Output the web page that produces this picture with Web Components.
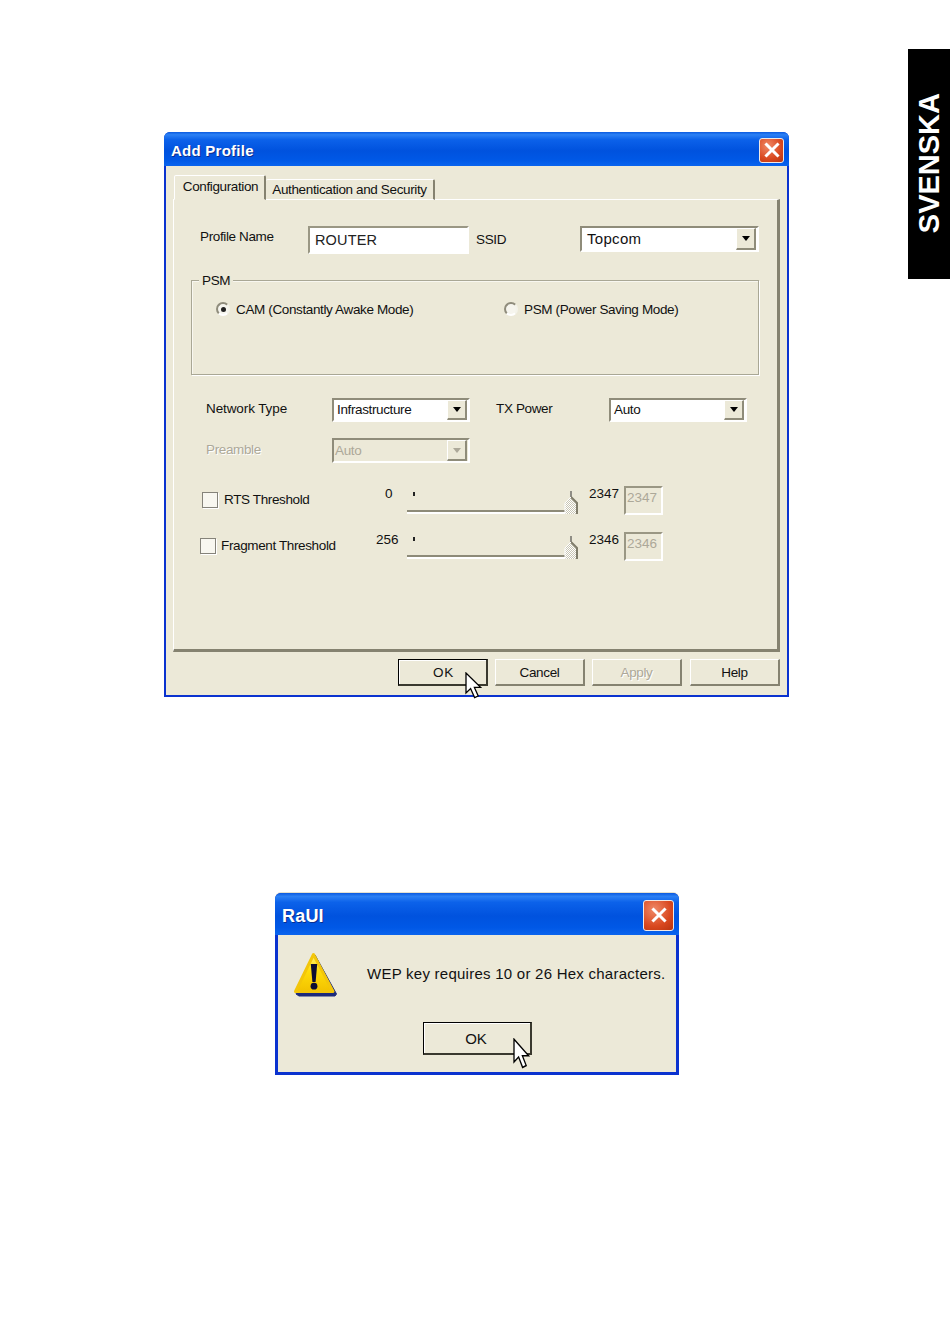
<!DOCTYPE html>
<html lang="sv">
<head>
<meta charset="utf-8">
<title>Add Profile</title>
<style>
  html, body { margin: 0; background: #fff; }
  body { font-family: "Liberation Sans", Arial, sans-serif; color: #111; font-size: 13.5px; letter-spacing: -.37px; }
  .page { position: relative; width: 950px; height: 1344px; overflow: hidden; padding-top: 132px; box-sizing: border-box; }
</style>
</head>
<body>
<div class="page">
  <side-tab>SVENSKA</side-tab>
  <add-profile-dialog></add-profile-dialog>
  <wep-alert></wep-alert>
</div>

<script>
// small helper so every element gets an open shadow root with its own styles
function shadow(el, html) {
  el.attachShadow({ mode: "open" }).innerHTML = html;
}

const CURSOR = `<svg style="display:block;height:var(--ch,27px)" width="18" height="27" viewBox="0 0 18 27" preserveAspectRatio="none">
  <path d="M1 1V21L5.6 16.6L9.6 25.6L13.2 24L9.4 15.4H15.6Z" fill="#fff" stroke="#000" stroke-width="1.3" stroke-linejoin="miter"/>
</svg>`;

class SideTab extends HTMLElement {
  connectedCallback() {
    shadow(this, `<style>
      :host { position: absolute; right: 0; top: 49px; width: 42px; height: 230px; background: #000; display: flex; align-items: center; justify-content: center; }
      span { writing-mode: vertical-rl; transform: rotate(180deg); color: #fff; letter-spacing: 0; font: bold 29px "Liberation Sans", Arial, sans-serif; position: relative; top: -1px; }
    </style><span><slot></slot></span>`);
  }
}

class XpWindow extends HTMLElement {
  connectedCallback() {
    shadow(this, `<style>
      :host { display: block; box-sizing: border-box; background: #0a32cf; border-radius: 6px 6px 0 0; padding: 0 var(--edge, 2px) var(--edge, 2px); box-shadow: 0 -1px 0 var(--rim, transparent); }
      .bar { height: var(--bar-h, 34px); margin: 0 calc(var(--edge, 2px) * -1); padding: var(--bar-top, 2px) 5px 0 7px; box-sizing: border-box; display: flex; align-items: center; justify-content: space-between;
        border-radius: 6px 6px 0 0;
        background: linear-gradient(#0a5ae0 0, #2b80f4 8%, #0c62ea 22%, #0052de 55%, #0058e6 82%, #0a64ee 100%); }
      .title { color: #fff; font: bold var(--title-size, 15px) "Liberation Sans", Arial, sans-serif; letter-spacing: var(--title-ls, .25px); text-shadow: 1px 1px 0 #0a2f8f; position: relative; top: var(--title-top, 0); }
      .close { box-sizing: border-box; width: var(--close-w, 25px); height: var(--close-h, 25px); border: 1px solid #f2e9e4; border-radius: 3px;
        background: radial-gradient(circle at 35% 30%, #f08a68, #d9481f 60%, #b8340f); display: flex; align-items: center; justify-content: center; }
      .client { background: #ece9d8; box-sizing: border-box; height: calc(100% - var(--bar-h, 34px)); }
    </style>
    <div class="bar">
      <span class="title">${this.getAttribute("heading") || ""}</span>
      <span class="close"><svg width="16" height="16" viewBox="0 0 16 16"><path d="M2.5 2.5L13.5 13.5M13.5 2.5L2.5 13.5" stroke="#fff" stroke-width="3" stroke-linecap="square"/></svg></span>
    </div>
    <div class="client"><slot></slot></div>`);
  }
}

class XpField extends HTMLElement {
  connectedCallback() {
    shadow(this, `<style>
      :host { display: flex; align-items: center; box-sizing: border-box; background: #fff; height: 28px;
        border: 2px solid; border-color: #9a9784 #fff #fff #9a9784; padding-left: 5px; color: #222; }
      :host([disabled]) { background: #ece9d8; color: #aca899; padding: 0 0 5px 1px; letter-spacing: 0; }
    </style><slot></slot>`);
  }
}

class XpCombo extends HTMLElement {
  connectedCallback() {
    const off = this.hasAttribute("disabled");
    shadow(this, `<style>
      :host { display: flex; box-sizing: border-box; height: 24px; background: ${off ? "#ece9d8" : "#fff"};
        color: ${off ? "#aca899" : "#111"}; border: 2px solid; border-color: #8f8c7a #fff #fff #8f8c7a; }
      .val { flex: 1; align-self: center; padding-left: var(--pad, 3px); font-size: var(--size, 13.5px); letter-spacing: var(--ls, -.37px); white-space: nowrap; }
      .btn { box-sizing: border-box; width: 20px; margin-right: 1px; background: #ece9d8; display: flex; align-items: center; justify-content: center;
        border: 1px solid; border-color: #fff #8f8c7a #8f8c7a #fff; border-right-width: 2px; border-bottom-width: 2px; }
      .btn i { width: 0; height: 0; border: 4.5px solid transparent; border-top: 5px solid ${off ? "#aca899" : "#000"}; border-bottom: 0; }
    </style><span class="val"><slot></slot></span><span class="btn"><i></i></span>`);
  }
}

class XpButton extends HTMLElement {
  connectedCallback() {
    const def = this.hasAttribute("default");
    const off = this.hasAttribute("disabled");
    shadow(this, `<style>
      :host { display: flex; position: relative; box-sizing: border-box; width: var(--w, 90px); height: var(--h, 27px); align-items: center; justify-content: center;
        background: #ece9d8; color: ${off ? "#aca899" : "#111"};
        border: 1px solid; border-color: ${def ? "#000" : "#fff"}; border-right: 2px solid #858270; border-bottom: 2px solid #858270; ${off ? "text-shadow: 1px 1px 0 #fff;" : ""} }
      :host([default]) { box-shadow: inset 1px 1px 0 #fff; border-right-color: #3a392f; border-bottom-color: #3a392f; }
      span { position: relative; left: var(--shift, 0); }
      .cursor { position: absolute; left: var(--cx, 66px); top: var(--cy, 12px); line-height: 0; }
    </style><span><slot></slot></span>${this.hasAttribute("cursor") ? `<div class="cursor">${CURSOR}</div>` : ""}`);
  }
}

class XpCheck extends HTMLElement {
  connectedCallback() {
    shadow(this, `<style>
      :host { display: inline-block; box-sizing: border-box; width: 16px; height: 16px; flex: none; background: #f8f7f0;
        border: 1px solid #85837a; box-shadow: 1px 1px 0 #fff; }
    </style>`);
  }
}

class XpRadio extends HTMLElement {
  connectedCallback() {
    const on = this.hasAttribute("checked");
    shadow(this, `<style>
      :host { display: inline-flex; flex: none; align-items: center; justify-content: center; box-sizing: border-box; width: 14px; height: 14px; border-radius: 50%;
        background: #f6f5ee; border: 2px solid; border-color: #8f8c7c #f4f3ea #fff #8f8c7c; }
      i { width: 5px; height: 5px; border-radius: 50%; background: #222; }
    </style>${on ? "<i></i>" : ""}`);
  }
}

class XpSlider extends HTMLElement {
  connectedCallback() {
    shadow(this, `<style>
      :host { display: block; position: relative; width: 171px; height: 25px; flex: none; }
      .track { position: absolute; left: 0; right: 12px; bottom: 1px; height: 2px; background: #8d8a78; border-bottom: 2px solid #fff; }
      .tick { position: absolute; left: 6px; top: 2px; width: 2px; height: 4px; background: #222; }
      svg { position: absolute; right: 0; bottom: 0; }
    </style>
    <div class="tick"></div><div class="track"></div>
    <svg width="14" height="25" viewBox="0 0 14 25">
      <defs><pattern id="dither" width="2" height="2" patternUnits="userSpaceOnUse">
        <rect width="2" height="2" fill="#fff"/><rect width="1" height="1" fill="#c9c6b4"/><rect x="1" y="1" width="1" height="1" fill="#c9c6b4"/>
      </pattern></defs>
      <path d="M7 1V7" stroke="#333" stroke-width="1"/>
      <path d="M1 24V13L7 7L13 13V24Z" fill="url(#dither)"/>
      <path d="M7 7L13 13V24" fill="none" stroke="#7f7c6a" stroke-width="2"/>
      <path d="M1 24V13L7 7" fill="none" stroke="#fff" stroke-width="1"/>
    </svg>`);
  }
}

class XpTabs extends HTMLElement {
  connectedCallback() {
    shadow(this, `<style>
      :host { display: flex; align-items: flex-end; margin-left: 1px; position: relative; z-index: 1; height: 25px; margin-bottom: -1px; }
      .tab { box-sizing: border-box; display: flex; align-items: center; justify-content: center; background: #ece9d8; border-radius: 2px 2px 0 0; white-space: nowrap;
        border: 1px solid; border-color: #fff #858270 transparent #fff; border-right-width: 2px; }
      .on { width: 92px; height: 25px; padding-left: 2px; }
      .off { width: 169px; height: 21px; border-left: 0; border-bottom: 1px solid #fff; }
      .on span { position: relative; top: -1px; }
    </style>
    <div class="tab on"><span>Configuration</span></div>
    <div class="tab off"><span>Authentication and Security</span></div>`);
  }
}

class XpGroup extends HTMLElement {
  connectedCallback() {
    shadow(this, `<style>
      :host { display: block; position: relative; box-sizing: border-box; border: 1px solid #a9a795; box-shadow: 1px 1px 0 #fff, inset 1px 1px 0 #f8f7f0; }
      .legend { position: absolute; left: 7px; top: -8px; background: #ece9d8; padding: 0 3px; line-height: 16px; }
    </style><div class="legend">${this.getAttribute("legend")}</div><slot></slot>`);
  }
}

class AddProfileDialog extends HTMLElement {
  connectedCallback() {
    shadow(this, `<style>
      :host { display: block; box-sizing: border-box; margin-left: 164px; width: 625px; height: 565px; }
      xp-window { height: 100%; }
      .client { padding: 9px 5px 0 7px; box-sizing: border-box; }
      .panel { box-sizing: border-box; width: 607px; height: 453px; padding-top: 26px;
        border: 1px solid; border-color: #fff #858270 #858270 #fff; border-right-width: 3px; border-bottom-width: 3px; }
      .row { display: flex; align-items: flex-start; line-height: 16px; }
      .radios { display: flex; align-items: center; height: 16px; padding-top: 20px; }
      .off { color: #aca899; text-shadow: 1px 1px 0 #fff; }
      .num { letter-spacing: 0; }
      .buttons { display: flex; gap: 7px; margin: 7px 0 0 225px; }
      .buttons xp-button:first-child { letter-spacing: .8px; --shift: 1px; }
      .buttons xp-button:last-child { margin-left: 1px; }
      xp-field.small { width: 39px; height: 29px; }
    </style>
    <xp-window heading="Add Profile">
      <div class="client">
        <xp-tabs></xp-tabs>
        <div class="panel">
          <div class="row" style="height:28px">
            <span style="margin:3px 0 0 26px;width:108px">Profile Name</span>
            <xp-field style="width:161px;font-size:14.5px;letter-spacing:.15px">ROUTER</xp-field>
            <span style="margin:6px 0 0 7px;width:104px">SSID</span>
            <xp-combo style="width:179px;height:26px;--size:15px;--ls:.3px;--pad:5px">Topcom</xp-combo>
          </div>
          <xp-group legend="PSM" style="margin:26px 0 0 17px;width:568px;height:95px">
            <div class="radios">
              <xp-radio checked style="margin-left:24px"></xp-radio>
              <span style="margin-left:6px;width:268px">CAM (Constantly Awake Mode)</span>
              <xp-radio></xp-radio>
              <span style="margin-left:6px">PSM (Power Saving Mode)</span>
            </div>
          </xp-group>
          <div class="row" style="margin-top:23px;height:24px">
            <span style="margin:3px 0 0 32px;width:126px;letter-spacing:-.1px">Network Type</span>
            <xp-combo style="width:138px">Infrastructure</xp-combo>
            <span style="margin:3px 0 0 26px;width:113px">TX Power</span>
            <xp-combo style="width:138px">Auto</xp-combo>
          </div>
          <div class="row" style="margin-top:16px;height:25px">
            <span class="off" style="margin:4px 0 0 32px;width:126px">Preamble</span>
            <xp-combo disabled style="width:138px;height:25px;--pad:1px">Auto</xp-combo>
          </div>
          <div class="row" style="margin-top:23px;height:30px">
            <xp-check style="margin:6px 0 0 28px"></xp-check>
            <span style="margin:6px 0 0 6px;width:161px">RTS Threshold</span>
            <span class="num" style="width:22px">0</span>
            <xp-slider style="margin-top:4px"></xp-slider>
            <span class="num" style="margin-left:11px;width:35px">2347</span>
            <xp-field class="small num" disabled>2347</xp-field>
          </div>
          <div class="row" style="margin-top:16px;height:29px">
            <xp-check style="margin:6px 0 0 26px"></xp-check>
            <span style="margin:6px 0 0 5px;width:155px">Fragment Threshold</span>
            <span class="num" style="width:31px">256</span>
            <xp-slider style="margin-top:3px"></xp-slider>
            <span class="num" style="margin-left:11px;width:35px">2346</span>
            <xp-field class="small num" disabled>2346</xp-field>
          </div>
        </div>
        <div class="buttons">
          <xp-button default cursor>OK</xp-button>
          <xp-button>Cancel</xp-button>
          <xp-button disabled>Apply</xp-button>
          <xp-button>Help</xp-button>
        </div>
      </div>
    </xp-window>`);
  }
}

class WepAlert extends HTMLElement {
  connectedCallback() {
    shadow(this, `<style>
      :host { display: block; margin: 196px 0 0 275px; width: 404px; height: 182px; }
      xp-window { height: 100%; --rim: #e4e1d0; --edge: 3px; --bar-h: 42px; --bar-top: 2px; --title-size: 18px; --title-ls: .2px; --title-top: 1px; --close-w: 31px; --close-h: 31px; }
      .body { display: flex; align-items: flex-start; padding: 17px 0 0 15px; height: 45px; }
      svg { flex: none; }
      .msg { margin: 13px 0 0 28px; font-size: 15px; letter-spacing: .25px; line-height: 18px; white-space: nowrap; color: #111; }
      xp-button { margin: 25px 0 0 145px; --w: 109px; --h: 33px; --cx: 89px; --cy: 15px; --shift: -1px; --ch: 31px; font-size: 15px; letter-spacing: 0; }
    </style>
    <xp-window heading="RaUI">
      <div class="body">
        <svg width="46" height="46" viewBox="0 0 46 46">
          <defs><linearGradient id="y" x1="0" y1="0" x2="0" y2="1"><stop offset="0" stop-color="#fff27a"/><stop offset=".45" stop-color="#ffdc0a"/><stop offset="1" stop-color="#f2c200"/></linearGradient></defs>
          <path d="M22 3L43.5 42L42 44H6L3 42Z" fill="#1c2a7c" stroke="#1c2a7c" stroke-width="1" stroke-linejoin="round"/>
          <path d="M20.5 2.5L40 39.5H2.5Z" fill="url(#y)" stroke="#f3c60a" stroke-width="3" stroke-linejoin="round"/>
          <path d="M17.8 12H24.2L22.6 30H19.4Z" fill="#0d0d33"/>
          <circle cx="21" cy="34.2" r="3.4" fill="#0d0d33"/>
        </svg>
        <div class="msg">WEP key requires 10 or 26 Hex characters.</div>
      </div>
      <xp-button default cursor>OK</xp-button>
    </xp-window>`);
  }
}

customElements.define("side-tab", SideTab);
customElements.define("xp-window", XpWindow);
customElements.define("xp-field", XpField);
customElements.define("xp-combo", XpCombo);
customElements.define("xp-button", XpButton);
customElements.define("xp-check", XpCheck);
customElements.define("xp-radio", XpRadio);
customElements.define("xp-slider", XpSlider);
customElements.define("xp-tabs", XpTabs);
customElements.define("xp-group", XpGroup);
customElements.define("add-profile-dialog", AddProfileDialog);
customElements.define("wep-alert", WepAlert);
</script>
</body>
</html>
